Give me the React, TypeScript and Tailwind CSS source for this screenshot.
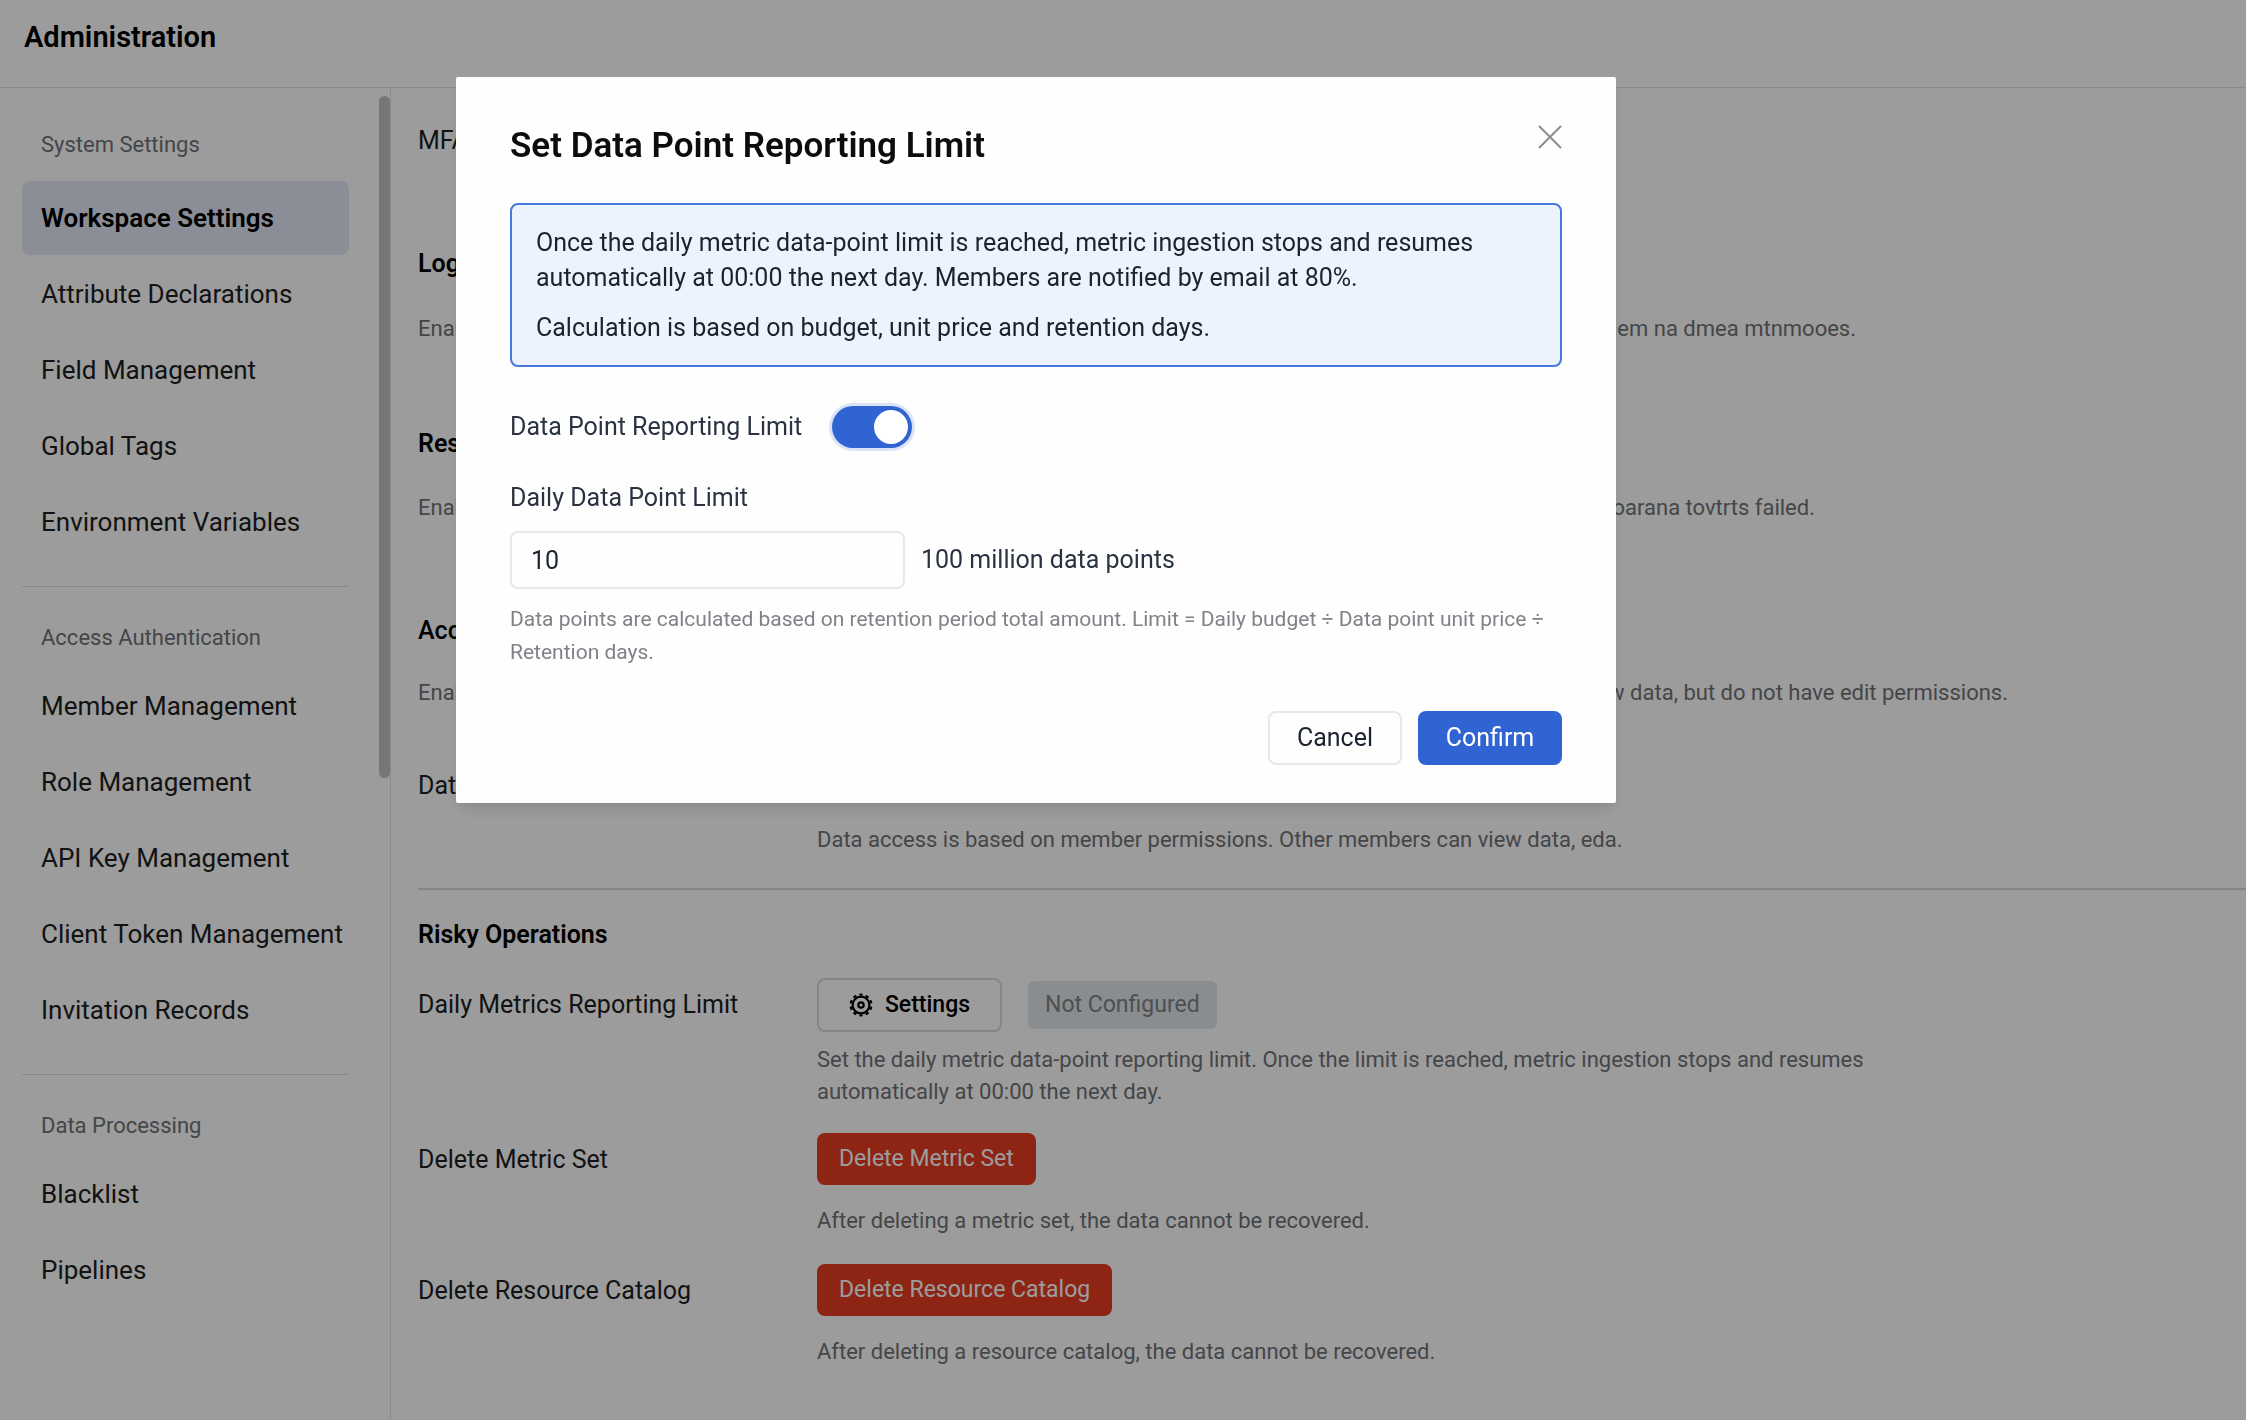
import React from 'react';

type NavGroup = { title: string; items: string[] };

const groups: NavGroup[] = [
  {
    title: 'System Settings',
    items: ['Workspace Settings', 'Attribute Declarations', 'Field Management', 'Global Tags', 'Environment Variables'],
  },
  {
    title: 'Access Authentication',
    items: ['Member Management', 'Role Management', 'API Key Management', 'Client Token Management', 'Invitation Records'],
  },
  { title: 'Data Processing', items: ['Blacklist', 'Pipelines'] },
];

function Sidebar() {
  return (
    <aside className="flex w-[391px] shrink-0 justify-between border-r border-[#e2e2e2]">
      <nav aria-label="Administration" className="ml-[22px] flex w-[327px] flex-col gap-[27px]">
        {groups.map((group, index) => (
          <section key={group.title} className={index === 0 ? 'pt-[41px]' : 'border-t border-[#dedede] pt-[35px]'}>
            <h2 className={index === 0 ? 'mb-5 px-[19px] text-[22px] leading-8 text-[#6f7377]' : 'mb-[15px] px-[19px] text-[22px] leading-8 text-[#6f7377]'}>
              {group.title}
            </h2>
            <ul className="flex flex-col gap-0.5">
              {group.items.map((item) => (
                <li key={item}>
                  <a
                    href="#"
                    aria-current={item === 'Workspace Settings' ? 'page' : undefined}
                    className="flex h-[74px] items-center rounded-lg px-[19px] text-[26px] whitespace-nowrap text-[#1c1e21] aria-[current=page]:bg-[#e4e9f5] aria-[current=page]:font-semibold aria-[current=page]:text-black"
                  >
                    {item}
                  </a>
                </li>
              ))}
            </ul>
          </section>
        ))}
      </nav>
      <div className="mt-2 h-[682px] w-[11px] rounded-full bg-[#bfc2c4]" />
    </aside>
  );
}

function Note({ tail, className }: { tail: string; className: string }) {
  return (
    <p className={`flex justify-between text-[22px] leading-8 text-[#6f7377] ${className}`}>
      <span>Enable</span>
      <span>{tail}</span>
    </p>
  );
}

function Row({ label, children }: { label: string; children: React.ReactNode }) {
  return (
    <div className="flex">
      <div className="w-[399px] shrink-0 leading-[54px] text-[#1c1e21]">{label}</div>
      <div className="max-w-[1080px] min-w-0 flex-1">{children}</div>
    </div>
  );
}

function SettingsIcon() {
  return (
    <svg viewBox="0 0 24 24" className="size-6" fill="none" stroke="currentColor" strokeWidth="2.2">
      <circle cx="12" cy="12" r="8.4" />
      <circle cx="12" cy="12" r="10.4" pathLength="20" strokeDasharray="1 1" strokeDashoffset="-0.5" />
      <circle cx="12" cy="12" r="2.7" />
    </svg>
  );
}

function Dialog() {
  return (
    <div className="fixed inset-0 bg-black/39 pt-[77px] pr-6 pl-[456px]">
      <div role="dialog" aria-modal="true" aria-labelledby="dialog-title" className="max-w-[1160px] rounded-xs bg-[#fefefe] px-[54px] pt-11 pb-[38px] shadow-lg">
        <div className="flex items-start justify-between">
          <h2 id="dialog-title" className="text-[35px] leading-[50px] font-semibold text-[#0b0c0e]">
            Set Data Point Reporting Limit
          </h2>
          <button type="button" aria-label="Close" className="mt-1 text-[#8b8d90]">
            <svg viewBox="0 0 24 24" className="size-6" fill="none" stroke="currentColor" strokeWidth="2" strokeLinecap="round">
              <path d="M1.5 1.5l21 21M22.5 1.5l-21 21" />
            </svg>
          </button>
        </div>
        <div className="mt-8 rounded-lg border-2 border-[#4678df] bg-[#edf3fd] px-6 py-5 text-[25px] leading-[35px] text-[#1c2230]">
          <p>
            Once the daily metric data-point limit is reached, metric ingestion stops and resumes
            automatically at 00:00 the next day. Members are notified by email at 80%.
          </p>
          <p className="mt-[15px]">Calculation is based on budget, unit price and retention days.</p>
        </div>
        <label className="mt-[38px] flex h-[44px] items-center gap-[30px] text-[25px] text-[#2b3342]">
          Data Point Reporting Limit
          <input
            type="checkbox"
            role="switch"
            defaultChecked
            className="relative h-[42px] w-20 appearance-none rounded-full bg-[#3064d3] shadow-[0_0_0_3px_#dbe4f6] before:absolute before:top-1 before:right-1 before:size-[34px] before:rounded-full before:bg-white"
          />
        </label>
        <label htmlFor="limit" className="mt-8 block text-[25px] leading-[34px] text-[#2b3342]">
          Daily Data Point Limit
        </label>
        <div className="mt-4 flex items-center gap-4 text-[25px] text-[#2b3342]">
          <input id="limit" defaultValue="10" className="h-[58px] w-[395px] rounded-lg border-2 border-[#e6e8ee] px-[19px] text-[#1c2230]" />
          <span>100 million data points</span>
        </div>
        <p className="mt-[14px] text-[21px] leading-[33px] text-[#7f8287]">
          Data points are calculated based on retention period total amount. Limit = Daily budget ÷ Data point unit price ÷
          Retention days.
        </p>
        <div className="mt-[42px] flex justify-end gap-4 text-[25px]">
          <button type="button" className="h-[54px] w-[134px] rounded-lg border-2 border-[#e6e8ee] text-[#1c2230]">
            Cancel
          </button>
          <button type="button" className="h-[54px] w-36 rounded-lg bg-[#3064d3] text-white">
            Confirm
          </button>
        </div>
      </div>
    </div>
  );
}

export default function App() {
  return (
    <div className="flex min-h-screen flex-col bg-white font-['Roboto',sans-serif] text-[#1c1e21]">
      <header className="flex h-[88px] items-center border-b border-[#e2e2e2] px-6 pb-3">
        <h1 className="text-[29px] font-semibold text-black">Administration</h1>
      </header>
      <div className="flex flex-1">
        <Sidebar />
        <main className="min-w-0 flex-1 overflow-hidden pt-[37px] pl-[27px] text-[25px] leading-8">
          <p>MFA</p>
          <h2 className="mt-[91px] font-semibold text-black">Login</h2>
          <Note className="mt-[33px] max-w-[1438px]" tail="aumem na dmea mtnmooes." />
          <h2 className="mt-[83px] font-semibold text-black">Reset</h2>
          <Note className="mt-8 max-w-[1397px]" tail="oarana tovtrts failed." />
          <h2 className="mt-[91px] font-medium text-black">Access</h2>
          <Note className="mt-[30px] max-w-[1590px]" tail="view data, but do not have edit permissions." />
          <div className="mt-[50px]">
            <Row label="Data">
              <p className="pt-[65px] text-[22px] leading-8 text-[#6f7377]">
                Data access is based on member permissions. Other members can view data, eda.
              </p>
            </Row>
          </div>
          <section className="mt-8 border-t-2 border-[#dcdcdc] pt-[29px]">
            <h2 className="font-semibold text-black">Risky Operations</h2>
            <div className="mt-[27px]">
              <Row label="Daily Metrics Reporting Limit">
                <div className="flex items-center gap-[26px] text-[23px]">
                  <button type="button" className="flex h-[54px] w-[185px] items-center justify-center gap-3 rounded-lg border-2 border-[#d9dadb] font-medium text-black">
                    <SettingsIcon />
                    Settings
                  </button>
                  <span className="rounded-md bg-[#e2e6ea] px-[17px] py-2 text-[#7e8387]">Not Configured</span>
                </div>
                <p className="mt-3 text-[22px] leading-8 text-[#6f7377]">
                  Set the daily metric data-point reporting limit. Once the limit is reached, metric ingestion stops and resumes automatically at 00:00 the next day.
                </p>
              </Row>
            </div>
            <div className="mt-[25px]">
              <Row label="Delete Metric Set">
                <button type="button" className="h-[52px] rounded-lg bg-[#e63b22] px-[22px] text-[23px] text-white">Delete Metric Set</button>
                <p className="mt-5 text-[22px] leading-8 text-[#6f7377]">After deleting a metric set, the data cannot be recovered.</p>
              </Row>
            </div>
            <div className="mt-[27px]">
              <Row label="Delete Resource Catalog">
                <button type="button" className="h-[52px] rounded-lg bg-[#e63b22] px-[22px] text-[23px] text-white">Delete Resource Catalog</button>
                <p className="mt-5 text-[22px] leading-8 text-[#6f7377]">After deleting a resource catalog, the data cannot be recovered.</p>
              </Row>
            </div>
          </section>
        </main>
      </div>
      <Dialog />
    </div>
  );
}
